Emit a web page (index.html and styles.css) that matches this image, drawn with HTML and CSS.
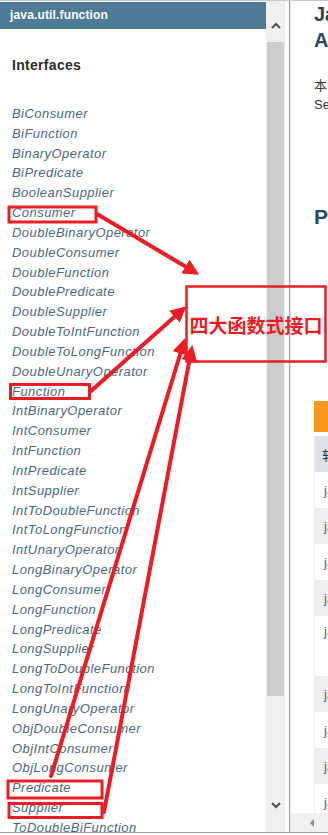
FILE: index.html
```html
<!DOCTYPE html>
<html lang="zh">
<head>
    <meta charset="UTF-8">
    <meta name="viewport" content="width=device-width, initial-scale=1.0">
    <title>java.util.function</title>
    <link rel="stylesheet" href="styles.css">
</head>
<body>
    <div class="frame">
        <aside class="nav">
            <div class="nav-list">
                <div class="nav-bar">java.util.function</div>
                <h2 class="nav-title">Interfaces</h2>
                <ul class="nav-items">
                    <li>BiConsumer</li>
                    <li>BiFunction</li>
                    <li>BinaryOperator</li>
                    <li>BiPredicate</li>
                    <li>BooleanSupplier</li>
                    <li>Consumer</li>
                    <li>DoubleBinaryOperator</li>
                    <li>DoubleConsumer</li>
                    <li>DoubleFunction</li>
                    <li>DoublePredicate</li>
                    <li>DoubleSupplier</li>
                    <li>DoubleToIntFunction</li>
                    <li>DoubleToLongFunction</li>
                    <li>DoubleUnaryOperator</li>
                    <li>Function</li>
                    <li>IntBinaryOperator</li>
                    <li>IntConsumer</li>
                    <li>IntFunction</li>
                    <li>IntPredicate</li>
                    <li>IntSupplier</li>
                    <li>IntToDoubleFunction</li>
                    <li>IntToLongFunction</li>
                    <li>IntUnaryOperator</li>
                    <li>LongBinaryOperator</li>
                    <li>LongConsumer</li>
                    <li>LongFunction</li>
                    <li>LongPredicate</li>
                    <li>LongSupplier</li>
                    <li>LongToDoubleFunction</li>
                    <li>LongToIntFunction</li>
                    <li>LongUnaryOperator</li>
                    <li>ObjDoubleConsumer</li>
                    <li>ObjIntConsumer</li>
                    <li>ObjLongConsumer</li>
                    <li>Predicate</li>
                    <li>Supplier</li>
                    <li>ToDoubleBiFunction</li>
                    <li>ToDoubleFunction</li>
                </ul>
            </div>
            <div class="vscroll">
                <div class="sb-btn sb-up">
                    <svg width="10" height="7" viewBox="0 0 10 7"><polyline points="1,6 5,2 9,6" fill="none" stroke="#505050" stroke-width="2"/></svg>
                </div>
                <div class="sb-thumb"></div>
                <div class="sb-rest"></div>
                <div class="sb-btn sb-down">
                    <svg width="10" height="7" viewBox="0 0 10 7"><polyline points="1,1 5,5 9,1" fill="none" stroke="#505050" stroke-width="2"/></svg>
                </div>
            </div>
        </aside>
        <div class="splitter"></div>
        <main class="content">
            <div class="content-body">
                <h1 class="title">Java 8 函数式接口<br>API 规范文档</h1>
                <p class="lead">本包提供了 lambda 表达式和方法引用的目标类型。</p>
                <p class="see">See: 描述</p>
                <h2 class="pkg">Package java.util.function</h2>
                <div class="tab">Interface Summary</div>
                <table class="summary">
                    <tr class="head"><th>软件接口</th></tr>
                    <tr><td>java.util.function.BiConsumer</td></tr>
                    <tr class="alt"><td>java.util.function.BiFunction</td></tr>
                    <tr><td>java.util.function.BinaryOperator</td></tr>
                    <tr class="alt"><td>java.util.function.BiPredicate</td></tr>
                    <tr class="tall"><td>java.util.function.BooleanSupplier</td></tr>
                    <tr class="alt"><td>java.util.function.Consumer</td></tr>
                    <tr><td>java.util.function.DoubleBinaryOperator</td></tr>
                    <tr class="alt"><td>java.util.function.DoubleConsumer</td></tr>
                    <tr><td>java.util.function.DoubleFunction</td></tr>
                </table>
            </div>
            <div class="hscroll">
                <span class="hs-left"></span>
            </div>
        </main>
    </div>

    <svg class="marks" width="328" height="835" viewBox="0 0 328 835">
        <defs>
            <marker id="head" markerWidth="4" markerHeight="4" refX="2.2" refY="2" orient="auto" markerUnits="strokeWidth">
                <path d="M0,0 L4,2 L0,4 Z" fill="#ec1c24"/>
            </marker>
        </defs>
        <g fill="none" stroke="#ec1c24" stroke-width="3">
            <rect x="9" y="207" width="87" height="15"/>
            <rect x="10.5" y="384.5" width="79" height="14"/>
            <rect x="8" y="781" width="94" height="17"/>
            <rect x="9" y="803.5" width="93" height="14"/>
            <rect x="186.5" y="286.5" width="139" height="75" stroke-width="2.5"/>
        </g>
        <g stroke="#ec1c24" stroke-width="4" stroke-linecap="round" marker-end="url(#head)">
            <line x1="97" y1="214" x2="193" y2="271"/>
            <line x1="91" y1="391" x2="181" y2="311"/>
            <line x1="51" y1="776" x2="183" y2="345"/>
            <line x1="104" y1="812" x2="191" y2="352"/>
        </g>
    </svg>
    <div class="callout">四大函数式接口</div>
</body>
</html>
```

FILE: styles.css
```css
* { margin: 0; padding: 0; box-sizing: border-box; }
body {
    font-family: "Liberation Sans", Arial, "Noto Sans CJK SC", sans-serif;
    background: white;
    color: #353833;
    width: 328px;
    height: 835px;
    overflow: hidden;
    position: relative;
}
.frame {
    display: flex;
    height: 833px;
    border-top: 1px solid #c8c8c8;
    border-bottom: 1px solid #a0a0a0;
    overflow: hidden;
}
.nav { display: flex; width: 289px; flex-shrink: 0; }
.nav-list { width: 266px; overflow: hidden; }
.nav-bar {
    margin-top: 1px;
    height: 27px;
    line-height: 27px;
    padding-left: 10px;
    background: #4d7a97;
    color: white;
    font-size: 12px;
    font-weight: bold;
    letter-spacing: 0.15px;
}
.nav-title {
    margin: 27px 0 0 12px;
    font-size: 14px;
    line-height: 18px;
    letter-spacing: 0.3px;
    color: #2c2c2c;
}
.nav-items {
    list-style: none;
    margin: 30px 0 0 12px;
    font-size: 13px;
    font-style: italic;
    line-height: 19.83px;
    letter-spacing: 0.45px;
    color: #4a6782;
    white-space: nowrap;
}
.vscroll {
    width: 19px;
    display: flex;
    flex-direction: column;
    background: #f0f0f0;
}
.sb-btn { display: flex; justify-content: center; }
.sb-up { height: 41px; padding-top: 21px; }
.sb-thumb { height: 654px; margin: 0 1px; background: #cdcdcd; }
.sb-rest { flex: 1; }
.sb-down { height: 42px; padding-top: 12px; }
.splitter {
    width: 2px;
    flex-shrink: 0;
    border-left: 1px solid #a0a0a0;
    background: #e6e6e6;
}
.content {
    flex: 1;
    display: flex;
    flex-direction: column;
    min-width: 0;
}
.content-body {
    flex: 1;
    overflow: hidden;
    padding-left: 23px;
    white-space: nowrap;
}
.title {
    font-size: 20px;
    line-height: 26px;
    color: #2c4557;
}
.lead { margin-top: 24px; font-size: 13px; line-height: 18px; }
.see { margin-top: 1px; font-size: 13px; line-height: 18px; }
.pkg {
    margin-top: 90px;
    font-size: 21px;
    line-height: 26px;
    color: #2c4557;
}
.tab {
    margin-top: 171px;
    height: 31px;
    line-height: 31px;
    padding-left: 16px;
    background: #f8981d;
    color: #253441;
    font-weight: bold;
    font-size: 13px;
}
.summary {
    margin-top: 4px;
    border-collapse: collapse;
    font-size: 13px;
    width: 400px;
}
.summary th, .summary td {
    text-align: left;
    height: 36px;
    padding: 0 0 0 9px;
    border-left: 1px solid #eeeeee;
}
.summary td { color: #4a6782; }
.summary .head th { background: #dee3e9; color: #253441; font-weight: normal; padding-left: 7px; }
.summary .alt td { background: #eeeeee; }
.summary .tall td { height: 60px; vertical-align: top; padding-top: 8px; }
.hscroll {
    height: 19px;
    flex-shrink: 0;
    background: #f0f0f0;
    padding-left: 19px;
    display: flex;
    align-items: center;
}
.hs-left {
    width: 0;
    height: 0;
    border-top: 4px solid transparent;
    border-bottom: 4px solid transparent;
    border-right: 4px solid #8a8a8a;
}
.marks { position: absolute; top: 0; left: 0; pointer-events: none; }
.callout {
    position: absolute;
    left: 186px;
    top: 286px;
    width: 140px;
    height: 76px;
    display: flex;
    align-items: center;
    justify-content: center;
    font-family: "Noto Sans CJK SC", sans-serif;
    font-weight: bold;
    font-size: 19px;
    color: #ec1c24;
}
```
